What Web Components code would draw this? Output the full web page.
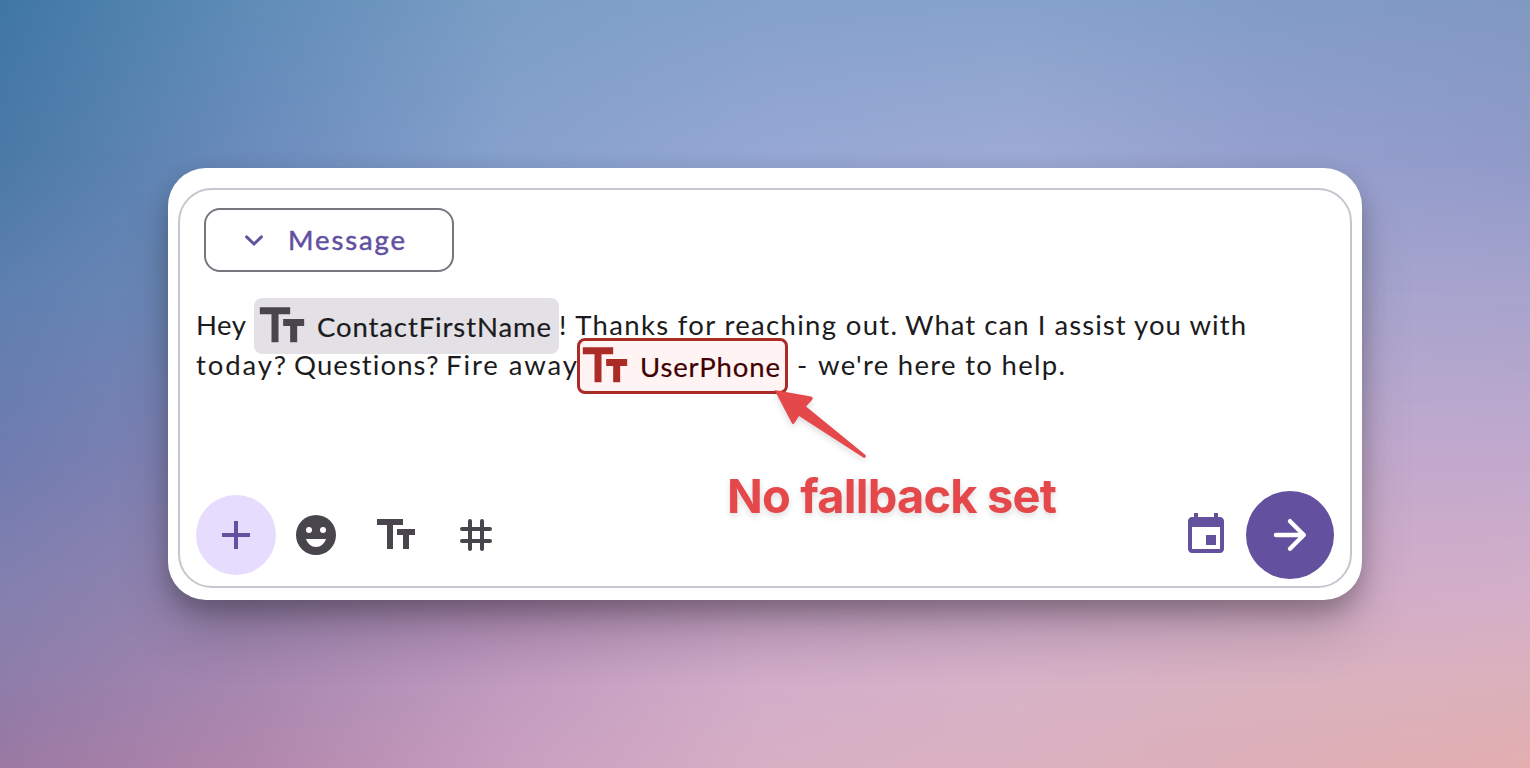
<!DOCTYPE html>
<html lang="en">
<head>
<meta charset="utf-8">
<title>Message composer</title>
<style>
html,body{margin:0;padding:0;width:1530px;height:768px;overflow:hidden}
body{font-family:Lato,"Open Sans",sans-serif;color:#1c1b1d}
</style>
</head>
<body>
<gradient-stage>
  <message-composer>
    <mode-select slot="mode"><fit-text width="117">Message</fit-text></mode-select>
    <text-row slot="text">
      <fit-text width="50">Hey</fit-text>
      <field-chip style="margin-left:8px" width="305"><fit-text width="234">ContactFirstName</fit-text></field-chip>
      <fit-text width="338">! Thanks for reaching out.</fit-text>
      <fit-text style="margin-left:8px" width="341">What can I assist you with</fit-text>
    </text-row>
    <text-row slot="text">
      <fit-text width="90">today?</fit-text>
      <fit-text style="margin-left:8px" width="145">Questions?</fit-text>
      <fit-text style="margin-left:7px" width="131">Fire away</fit-text>
      <field-chip error width="211"><fit-text width="140">UserPhone</fit-text></field-chip>
      <fit-text style="margin-left:9px" width="13">-</fit-text>
      <fit-text style="margin-left:8px" width="247">we're here to help.</fit-text>
    </text-row>
    <tool-button slot="tools" kind="tonal" icon="add"></tool-button>
    <tool-button slot="tools" icon="emoji"></tool-button>
    <tool-button slot="tools" icon="size"></tool-button>
    <tool-button slot="tools" icon="tag"></tool-button>
    <tool-button slot="send" icon="event" kind="accent"></tool-button>
    <tool-button slot="send" icon="send" kind="primary"></tool-button>
  </message-composer>
  <call-out slot="note"><fit-text width="330">No fallback set</fit-text></call-out>
</gradient-stage>
<script>
const ICONS = {
  add: '<path d="M5 11h6V5h2v6h6v2h-6v6h-2v-6H5z"/>',
  emoji: '<path fill-rule="evenodd" d="M12 2a10 10 0 1 0 0 20 10 10 0 0 0 0-20zM8.5 8a1.5 1.5 0 1 1 0 3 1.5 1.5 0 0 1 0-3zm7 0a1.5 1.5 0 1 1 0 3 1.5 1.5 0 0 1 0-3zM12 18c-2.28 0-4.22-1.66-5-4h10c-.78 2.34-2.72 4-5 4z"/>',
  size: '<path d="M2.500 4v3h5v12h3V7h5V4zM21.500 9h-9v3h3v7h3v-7h3z"/>',
  tag: '<path fill="none" stroke="currentColor" stroke-width="2" stroke-linecap="round" d="M9 5v14M15 5v14M5 9h14M5 15h14"/>',
  event: '<path d="M17 12h-5v5h5zM16 1v2H8V1H6v2H5c-1.110 0-1.990.9-1.990 2L3 19c0 1.100.89 2 2 2h14c1.100 0 2-.9 2-2V5c0-1.100-.9-2-2-2h-1V1zm3 18H5V8h14z"/>',
  send: '<path fill="none" stroke="currentColor" stroke-width="2.200" stroke-linecap="round" stroke-linejoin="round" d="M5 12h13.500M12 5.100l6.900 6.900-6.900 6.900"/>',
  down: '<path fill="none" stroke="currentColor" stroke-width="1.500" stroke-linecap="round" stroke-linejoin="miter" d="M8.300 10.400l3.700 3.600 3.700-3.600"/>'
};
const icon = (name, size) => `<svg width="${size}" height="${size}" viewBox="0 0 24 24" fill="currentColor">${ICONS[name]}</svg>`;

class Base extends HTMLElement {
  connectedCallback() {
    if (this.shadowRoot) return;
    this.attachShadow({ mode: 'open' }).innerHTML = this.render();
  }
}

/* Backdrop: rows of horizontal colour stops, faded into each other downwards. */
customElements.define('gradient-stage', class extends Base {
  render() {
    const rows = [
      [0,   ['#3f77a4', '#608db8', '#7b9ec5', '#84a2cb', '#86a3cc', '#819dc6', '#8199c3']],
      [150, ['#4a79a6', '#6b8cbd', '#86a1cc', '#95a7d3', '#9caad4', '#949fcd', '#8f9ac9']],
      [300, ['#5f80b0', '#728bba', '#8499c8', '#98a6d2', '#a0a8d4', '#a8a6d0', '#a8a4cd']],
      [450, ['#6f7cb0', '#8684b5', '#9488b6', '#a996c0', '#b29fc6', '#c1a9cd', '#c1a9cd']],
      [600, ['#8480ae', '#9a84ae', '#b08db6', '#c29fc2', '#cba8c8', '#d2acc8', '#d4afc8']],
      [690, ['#907ca9', '#a888b0', '#c29cc0', '#d3aec9', '#d8b3c7', '#dab3be', '#dcb1ba']],
      [768, ['#9a79a2', '#b287ac', '#c99fc0', '#d7afc4', '#dab1c0', '#ddaeb7', '#e3aeb0']]
    ];
    const layers = rows.map(([y, c], i) => {
      const mask = i ? `;-webkit-mask-image:linear-gradient(transparent ${rows[i-1][0]}px,#000 ${y}px);mask-image:linear-gradient(transparent ${rows[i-1][0]}px,#000 ${y}px)` : '';
      return `<i style="background:linear-gradient(90deg,${c})${mask}"></i>`;
    }).join('');
    return `<style>
      :host{display:block;position:relative;width:1530px;height:768px;box-sizing:border-box;padding:168px}
      i{position:absolute;inset:0}
      .content{position:relative}
    </style>${layers}<div class="content"><slot></slot></div><slot name="note"></slot>`;
  }
});

customElements.define('message-composer', class extends Base {
  render() {
    return `<style>
      :host{display:block;box-sizing:border-box;width:1194px;height:432px;padding:20px 10px 12px;border-radius:38px;background:#fff;
        box-shadow:0 12px 24px rgba(0,0,0,.24),0 34px 60px -8px rgba(0,0,0,.2)}
      .frame{box-sizing:border-box;height:400px;border:2px solid #c9c4cf;border-radius:34px;padding:18px 16px 7px;display:flex;flex-direction:column}
      .mode{display:flex;padding-left:8px}
      .text{margin-top:33px;display:flex;flex-direction:column}
      .bar{margin-top:auto;display:flex;align-items:center;justify-content:space-between}
      .group{display:flex;align-items:center}
    </style>
    <div class="frame">
      <div class="mode"><slot name="mode"></slot></div>
      <div class="text"><slot name="text"></slot></div>
      <div class="bar"><div class="group"><slot name="tools"></slot></div><div class="group"><slot name="send"></slot></div></div>
    </div>`;
  }
});

customElements.define('mode-select', class extends Base {
  render() {
    return `<style>
      :host{display:flex;align-items:center;box-sizing:border-box;width:249.500px;height:64px;border:2px solid #78757f;border-radius:16px;
        padding-left:24px;color:#63509f;font-size:27.500px;font-weight:400;line-height:40px;-webkit-text-stroke:.5px currentColor}
      svg{display:block;flex:none;margin-right:10px}
    </style>${icon('down', 48)}<slot></slot>`;
  }
});

customElements.define('text-row', class extends Base {
  render() {
    return `<style>:host{display:flex;align-items:center;height:40px;font-size:27.500px;line-height:40px}</style><slot></slot>`;
  }
});

customElements.define('field-chip', class extends Base {
  render() {
    const error = this.hasAttribute('error');
    return `<style>
      :host{position:relative;display:flex;flex:none;align-items:center;box-sizing:border-box;width:${this.getAttribute('width')}px;height:56px;top:1px;
        border-radius:8px;background:${error ? '#fff4f3' : '#e3e1e6'};color:${error ? '#410002' : '#1c1b1d'};
        border:3px solid ${error ? '#ab2b26' : '#e3e1e6'};font-size:27.500px;-webkit-text-stroke:.2px currentColor}
      svg{display:block;flex:none;color:${error ? '#ab2b26' : '#48454c'};margin:0 7px 0 -3px}
      .label{padding-top:2px}
    </style>${icon('size', 56)}<div class="label"><slot></slot></div>`;
  }
});

customElements.define('tool-button', class extends Base {
  render() {
    const kind = this.getAttribute('kind');
    const look = {
      tonal: 'background:#e6dcfe;color:#63509f',
      accent: 'color:#63509f',
      primary: 'width:88px;height:88px;background:#63509f;color:#fff'
    }[kind] || 'color:#48454c';
    return `<style>
      :host{display:flex;align-items:center;justify-content:center;width:80px;height:80px;border-radius:50%;${look}}
      svg{display:block}
    </style>${icon(this.getAttribute('icon'), 48)}`;
  }
});

/* Annotation that lies over the composer. */
customElements.define('call-out', class extends Base {
  render() {
    return `<style>
      :host{position:absolute;left:727px;top:386px;width:340px;color:#e5484b;font:700 47px/56px Inter,sans-serif;
        filter:drop-shadow(0 3px 3px rgba(0,0,0,.14))}
      svg{display:block;margin-left:43.500px}
      .label{margin-top:6px}
    </style>
    <svg width="100" height="76" viewBox="771 386 100 76"><path fill="currentColor" d="M774.500 390L811 396.500Q814 397.500 812 400L806 406.500L865.500 455Q866.500 457.500 864 458L799 416L794.500 423Q793 425.500 791.500 422.500Z"/></svg>
    <div class="label"><slot></slot></div>`;
  }
});

/* Spreads its letters evenly over the width it is given. */
customElements.define('fit-text', class extends HTMLElement {
  connectedCallback() {
    if (this.shadowRoot) return;
    this.attachShadow({ mode: 'open' }).innerHTML =
      '<style>:host{display:block;flex:none;width:max-content;white-space:nowrap}</style><slot></slot>';
    const target = +this.getAttribute('width');
    const natural = this.getBoundingClientRect().width;
    const gaps = this.textContent.length - 1;
    if (gaps) this.style.letterSpacing = (target - natural) / gaps + 'px';
    this.style.width = target + 'px';
  }
});
</script>
</body>
</html>
